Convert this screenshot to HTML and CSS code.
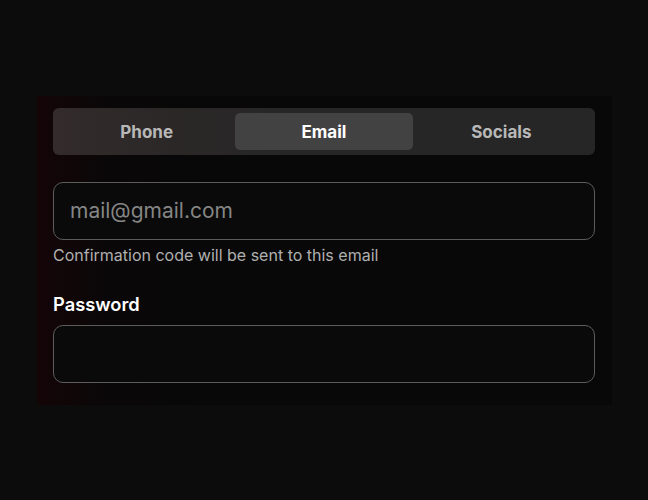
FILE: index.html
```html
<!DOCTYPE html>
<html lang="en">
<head>
<meta charset="utf-8">
<title>Sign up</title>
<link rel="stylesheet" href="styles.css">
</head>
<body>
<main class="page">
  <section class="panel">
    <div class="tabs">
      <button class="tab">Phone</button>
      <button class="tab active">Email</button>
      <button class="tab">Socials</button>
    </div>
    <div class="field">
      <input class="input" type="email" placeholder="mail@gmail.com">
      <p class="hint">Confirmation code will be sent to this email</p>
    </div>
    <div class="field">
      <label class="label">Password</label>
      <input class="input" type="password">
    </div>
  </section>
</main>
</body>
</html>
```
FILE: styles.css
```css
* { box-sizing: border-box; }
html, body { margin: 0; height: 100%; }
body {
  background: #0c0c0c;
  font-family: Inter, "Noto Sans", "Liberation Sans", sans-serif;
  color: #fff;
}
.page {
  padding: 96px 36px 0 37px;
}
.panel {
  width: 575px;
  padding: 12px 17px 22px 16px;
  background: linear-gradient(90deg, #140507 0%, #0a0708 12%, #080808 30%, #080808 100%);
}
.tabs {
  display: flex;
  height: 47px;
  padding: 5px;
  border-radius: 6px;
  background: linear-gradient(90deg, #332b2c 0%, #2a2727 25%, #262626 50%, #262626 100%);
}
.tab {
  flex: 1;
  border: 0;
  border-radius: 5px;
  background: transparent;
  font-family: inherit;
  font-size: 17px;
  font-weight: 700;
  color: #b8b8b8;
  cursor: pointer;
}
.tab.active {
  background: #424242;
  color: #fff;
}
.field {
  display: flex;
  flex-direction: column;
}
.tabs + .field { margin-top: 27px; }
.input {
  height: 58px;
  width: 100%;
  border: 1px solid #5c5c5c;
  border-radius: 10px;
  background: #0a0a0a;
  padding: 0 16px 2px;
  font-family: inherit;
  font-size: 21px;
  color: #fff;
  outline: none;
}
.input::placeholder { color: #858585; }
.hint {
  margin: 6px 0 0;
  font-size: 16px;
  line-height: 19px;
  color: #b0b0b0;
}
.label {
  margin-top: 28px;
  margin-bottom: 10px;
  font-size: 18.3px;
  line-height: 22px;
  font-weight: 600;
  color: #fff;
}
```
